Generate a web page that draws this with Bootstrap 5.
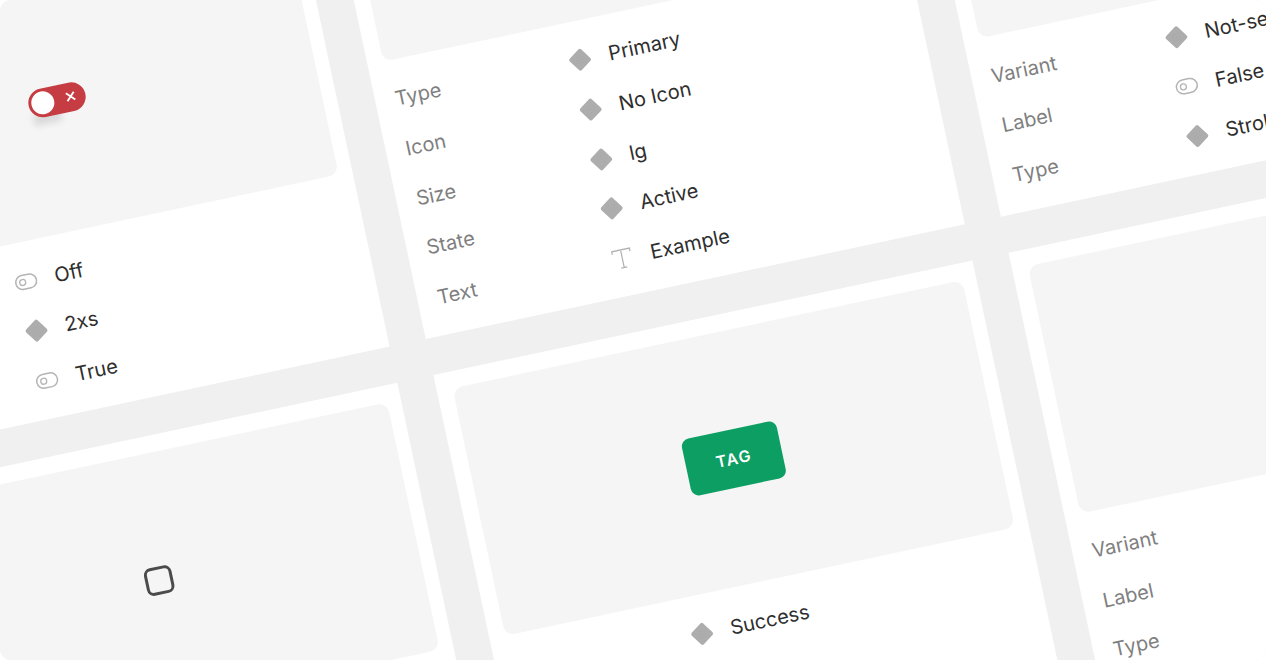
<!DOCTYPE html>
<html lang="en">
<head>
    <meta charset="UTF-8">
    <meta name="viewport" content="width=device-width, initial-scale=1">
    <title>Component specs</title>
    <link href="https://cdn.jsdelivr.net/npm/bootstrap@5.3.0/dist/css/bootstrap.min.css" rel="stylesheet">
    <style>
        body {
            background-color: #fff;
            font-family: "Inter", "Liberation Sans", sans-serif;
            overflow: hidden;
        }
        .viewport {
            width: 1266px;
            height: 660px;
            background-color: #f0f0f0;
            border-radius: 11px;
            overflow: hidden;
        }
        .board {
            display: grid;
            grid-template-columns: repeat(3, 551px);
            grid-auto-rows: 550px;
            gap: 37px;
            width: 1727px;
            transform-origin: 0 0;
            transform: rotate(-12deg) translate(-242px, -130px);
        }
        .spec-card {
            padding: 17px 14px 13px 16px;
        }
        .spec-short {
            height: 460px;
            align-self: end;
        }
        .preview {
            background-color: #f5f5f5;
            border-radius: 10px;
        }
        .preview-std {
            height: 253px;
        }
        .props {
            margin-top: 14px;
            padding-left: 4px;
        }
        .prop-row {
            height: 50.6px;
            font-size: 20px;
        }
        .prop-label {
            width: 177px;
            color: #7f7f7f;
        }
        .prop-value {
            color: #2e2e2e;
        }
        .prop-icon {
            width: 24px;
            height: 24px;
            margin-right: 17px;
            flex-shrink: 0;
        }
        .switch-wrap {
            position: relative;
        }
        .switch-wrap::before {
            content: "";
            position: absolute;
            left: 2px;
            top: 24px;
            width: 28px;
            height: 12px;
            background-color: rgba(0, 0, 0, .11);
            filter: blur(3px);
        }
        .switch-red {
            position: relative;
            width: 58px;
            height: 29px;
            padding: 3px;
            background-color: #c63c43;
            border-radius: 15px;
        }
        .switch-knob {
            width: 23px;
            height: 23px;
            background-color: #fff;
            border-radius: 50%;
        }
        .switch-x {
            margin-right: 6px;
        }
        .check-box {
            width: 28px;
            height: 28px;
            border: 3px solid #4b4b4b;
            border-radius: 7px;
        }
        .tag-green {
            width: 97px;
            height: 58px;
            background-color: #0d9e63;
            border-radius: 8px;
            color: #fff;
            font-size: 16px;
            font-weight: 600;
            letter-spacing: 1.5px;
        }
    </style>
</head>
<body>
    <svg width="0" height="0" class="d-block">
        <symbol id="i-diamond" viewBox="0 0 24 24">
            <rect x="3.700" y="3.700" width="16.600" height="16.600" rx="2" fill="#adadad" transform="rotate(55 12 12)"/>
            <g fill="#9f9f9f">
                <circle cx="9" cy="9" r=".4"/><circle cx="12" cy="9" r=".4"/><circle cx="15" cy="9" r=".4"/>
                <circle cx="9" cy="12" r=".4"/><circle cx="12" cy="12" r=".4"/><circle cx="15" cy="12" r=".4"/>
                <circle cx="9" cy="15" r=".4"/><circle cx="12" cy="15" r=".4"/><circle cx="15" cy="15" r=".4"/>
            </g>
        </symbol>
        <symbol id="i-switch" viewBox="0 0 24 24">
            <rect x="1.500" y="5" width="21" height="14" rx="7" fill="none" stroke="#b4b4b4" stroke-width="1.500"/>
            <circle cx="8.500" cy="12" r="3" fill="none" stroke="#b4b4b4" stroke-width="1.300"/>
        </symbol>
        <symbol id="i-text" viewBox="0 0 24 24">
            <path d="M3 6.500V3.500H21V6.500M12 3.500V21.500M9 21.500H15" fill="none" stroke="#b0b0b0" stroke-width="1.200"/>
        </symbol>
    </svg>

    <div class="viewport">
        <div class="board">

            <div class="card rounded-0 border-0 spec-card spec-short">
                <div class="preview flex-grow-1 d-flex align-items-center justify-content-center">
                    <div class="switch-wrap">
                        <div class="switch-red d-flex align-items-center justify-content-between">
                            <div class="switch-knob"></div>
                            <svg width="12" height="12" viewBox="0 0 12 12" class="switch-x">
                                <path d="M2 2L10 10M10 2L2 10" stroke="#fff" stroke-width="1.800"/>
                            </svg>
                        </div>
                    </div>
                </div>
                <div class="props">
                    <div class="prop-row d-flex align-items-center"><span class="prop-label"></span><svg class="prop-icon"><use href="#i-switch"/></svg><span class="prop-value">Off</span></div>
                    <div class="prop-row d-flex align-items-center"><span class="prop-label"></span><svg class="prop-icon"><use href="#i-diamond"/></svg><span class="prop-value">2xs</span></div>
                    <div class="prop-row d-flex align-items-center"><span class="prop-label"></span><svg class="prop-icon"><use href="#i-switch"/></svg><span class="prop-value">True</span></div>
                </div>
            </div>

            <div class="card rounded-0 border-0 spec-card">
                <div class="preview flex-grow-1"></div>
                <div class="props">
                    <div class="prop-row d-flex align-items-center"><span class="prop-label">Type</span><svg class="prop-icon"><use href="#i-diamond"/></svg><span class="prop-value">Primary</span></div>
                    <div class="prop-row d-flex align-items-center"><span class="prop-label">Icon</span><svg class="prop-icon"><use href="#i-diamond"/></svg><span class="prop-value">No Icon</span></div>
                    <div class="prop-row d-flex align-items-center"><span class="prop-label">Size</span><svg class="prop-icon"><use href="#i-diamond"/></svg><span class="prop-value">lg</span></div>
                    <div class="prop-row d-flex align-items-center"><span class="prop-label">State</span><svg class="prop-icon"><use href="#i-diamond"/></svg><span class="prop-value">Active</span></div>
                    <div class="prop-row d-flex align-items-center"><span class="prop-label">Text</span><svg class="prop-icon"><use href="#i-text"/></svg><span class="prop-value">Example</span></div>
                </div>
            </div>

            <div class="card rounded-0 border-0 spec-card spec-short">
                <div class="preview flex-grow-1"></div>
                <div class="props">
                    <div class="prop-row d-flex align-items-center"><span class="prop-label">Variant</span><svg class="prop-icon"><use href="#i-diamond"/></svg><span class="prop-value">Not-selected</span></div>
                    <div class="prop-row d-flex align-items-center"><span class="prop-label">Label</span><svg class="prop-icon"><use href="#i-switch"/></svg><span class="prop-value">False</span></div>
                    <div class="prop-row d-flex align-items-center"><span class="prop-label">Type</span><svg class="prop-icon"><use href="#i-diamond"/></svg><span class="prop-value">Stroke</span></div>
                </div>
            </div>

            <div class="card rounded-0 border-0 spec-card">
                <div class="preview preview-std d-flex align-items-center justify-content-center">
                    <div class="check-box"></div>
                </div>
            </div>

            <div class="card rounded-0 border-0 spec-card">
                <div class="preview preview-std d-flex align-items-center justify-content-center">
                    <div class="tag-green d-flex align-items-center justify-content-center">TAG</div>
                </div>
                <div class="props">
                    <div class="prop-row d-flex align-items-center"><span class="prop-label"></span><svg class="prop-icon"><use href="#i-diamond"/></svg><span class="prop-value">Success</span></div>
                </div>
            </div>

            <div class="card rounded-0 border-0 spec-card">
                <div class="preview preview-std"></div>
                <div class="props">
                    <div class="prop-row d-flex align-items-center"><span class="prop-label">Variant</span></div>
                    <div class="prop-row d-flex align-items-center"><span class="prop-label">Label</span></div>
                    <div class="prop-row d-flex align-items-center"><span class="prop-label">Type</span></div>
                </div>
            </div>

        </div>
    </div>

    <script src="https://cdn.jsdelivr.net/npm/bootstrap@5.3.0/dist/js/bootstrap.bundle.min.js"></script>
</body>
</html>
